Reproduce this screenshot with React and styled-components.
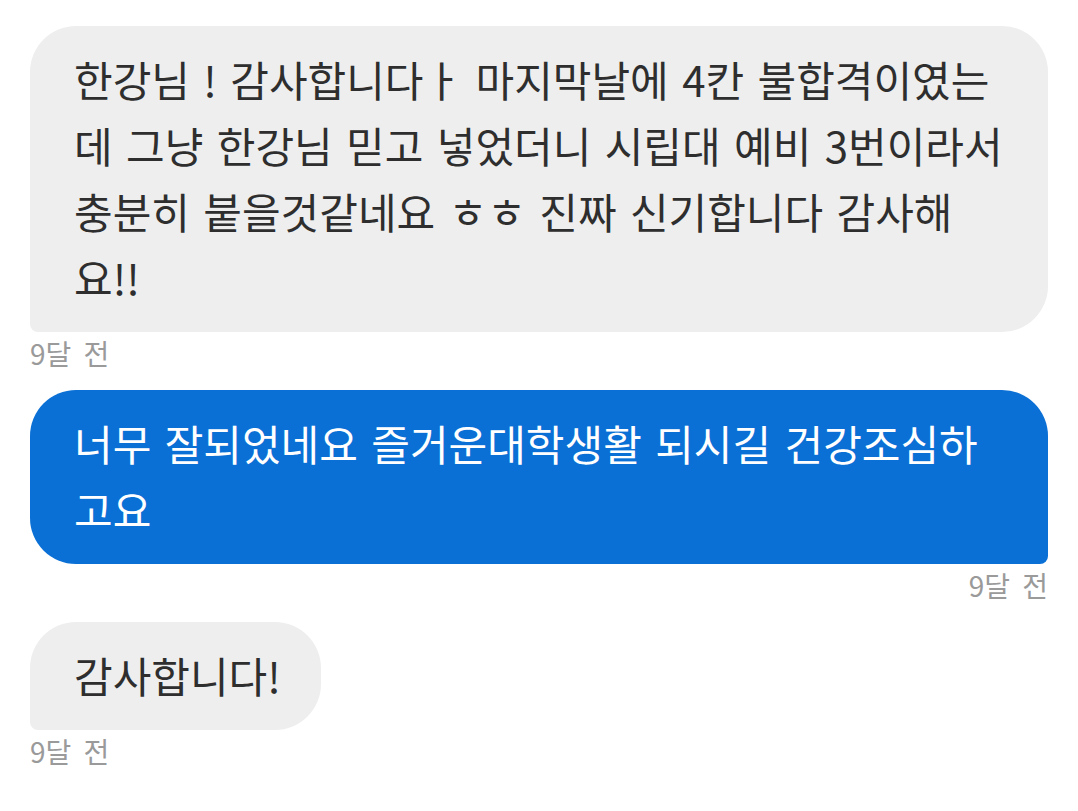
import React from 'react';
import styled, {createGlobalStyle, css} from 'styled-components';

const GlobalStyle = createGlobalStyle`
    html, body {
        margin: 0;
        padding: 0;
        background: #ffffff;
    }
    body {
        font-family: "Noto Sans CJK KR", "Noto Sans", sans-serif;
    }
`;

const Thread = styled.div`
    display: flex;
    flex-direction: column;
    padding: 26px 30px 0 30px;
    width: 1018px;
`;

const Message = styled.div`
    display: flex;
    flex-direction: column;
    align-items: ${p => p.mine ? 'flex-end' : 'flex-start'};
    margin-bottom: 20px;
`;

const Bubble = styled.div`
    box-sizing: border-box;
    max-width: 1018px;
    padding: 20px 40px 22px 44px;
    font-size: 42px;
    line-height: 66px;
    word-spacing: 4px;
    white-space: nowrap;
    ${p => p.mine ? css`
        background: #0a70d6;
        color: #ffffff;
        border-radius: 46px 46px 8px 46px;
    ` : css`
        background: #eeeeee;
        color: #2e2e2e;
        border-radius: 46px 46px 46px 8px;
    `}
    ${p => p.wide && css`
        width: 1018px;
    `}
`;

const Time = styled.div`
    margin-top: 4px;
    font-size: 28px;
    line-height: 34px;
    word-spacing: 6px;
    color: #9a9a9a;
`;

const messages = [
    {
        mine: false,
        wide: true,
        lines: [
            '한강님 ! 감사합니다ㅏ  마지막날에 4칸 불합격이였는',
            '데 그냥 한강님 믿고 넣었더니 시립대 예비 3번이라서',
            '충분히 붙을것같네요 ㅎㅎ 진짜 신기합니다 감사해',
            '요!!'
        ],
        time: '9달 전'
    },
    {
        mine: true,
        wide: true,
        lines: [
            '너무 잘되었네요 즐거운대학생활 되시길 건강조심하',
            '고요'
        ],
        time: '9달 전'
    },
    {
        mine: false,
        wide: false,
        lines: ['감사합니다!'],
        time: '9달 전'
    }
];

export default function App() {
    return (
        <>
            <GlobalStyle />
            <Thread>
                {messages.map((m, i) => (
                    <Message key={i} mine={m.mine}>
                        <Bubble mine={m.mine} wide={m.wide}>
                            {m.lines.map((l, j) => (
                                <React.Fragment key={j}>
                                    {j > 0 && <br />}
                                    {l}
                                </React.Fragment>
                            ))}
                        </Bubble>
                        <Time>{m.time}</Time>
                    </Message>
                ))}
            </Thread>
        </>
    );
}
